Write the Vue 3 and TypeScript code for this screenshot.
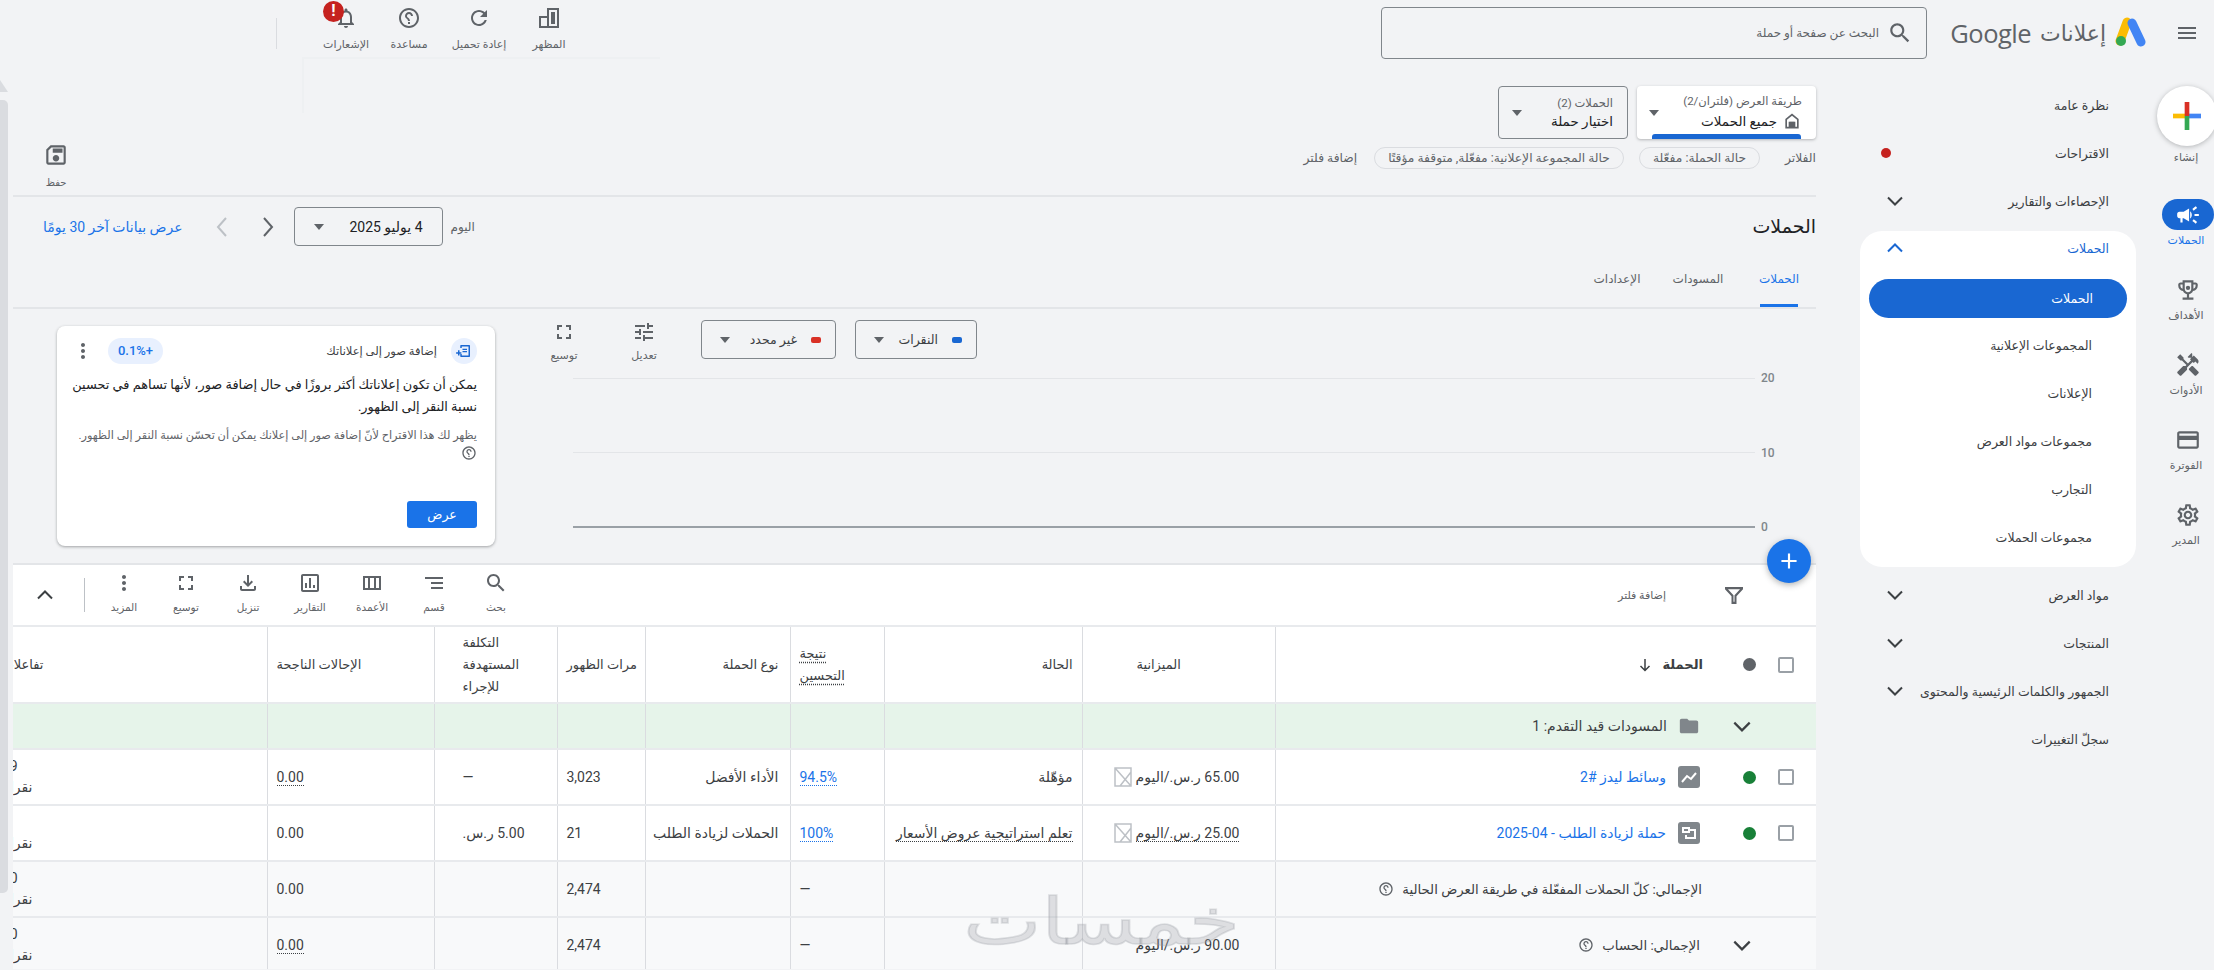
<script setup lang="ts">
interface RailItem {
  label: string
  icon: string
  active?: boolean
}

interface NavItem {
  label: string
  chevron?: boolean
  dot?: boolean
}

const ICONS: Record<string, string> = {
  menu: 'M3 18h18v-2H3v2zm0-5h18v-2H3v2zm0-7v2h18V6H3z',
  search:
    'M15.5 14h-.79l-.28-.27C15.41 12.59 16 11.11 16 9.5 16 5.91 13.09 3 9.5 3S3 5.91 3 9.5 5.91 16 9.5 16c1.61 0 3.09-.59 4.23-1.57l.27.28v.79l5 4.99L20.49 19l-4.99-5zm-6 0C7.01 14 5 11.99 5 9.5S7.01 5 9.5 5 14 7.01 14 9.5 11.99 14 9.5 14z',
  refresh:
    'M17.65 6.35C16.2 4.9 14.21 4 12 4c-4.42 0-7.99 3.58-7.99 8s3.57 8 7.99 8c3.73 0 6.84-2.55 7.73-6h-2.08c-.82 2.33-3.04 4-5.65 4-3.31 0-6-2.69-6-6s2.69-6 6-6c1.66 0 3.14.69 4.22 1.78L13 11h7V4l-2.35 2.35z',
  help: 'M11 18h2v-2h-2v2zm1-16C6.48 2 2 6.48 2 12s4.48 10 10 10 10-4.48 10-10S17.52 2 12 2zm0 18c-4.41 0-8-3.59-8-8s3.59-8 8-8 8 3.59 8 8-3.59 8-8 8zm0-14c-2.21 0-4 1.79-4 4h2c0-1.1.9-2 2-2s2 .9 2 2c0 2-3 1.75-3 5h2c0-2.25 3-2.5 3-5 0-2.21-1.79-4-4-4z',
  bell: 'M12 22c1.1 0 2-.9 2-2h-4c0 1.1.89 2 2 2zm6-6v-5c0-3.07-1.64-5.64-4.5-6.32V4c0-.83-.67-1.5-1.5-1.5s-1.5.67-1.5 1.5v.68C7.63 5.36 6 7.92 6 11v5l-2 2v1h16v-1l-2-2zm-2 1H8v-6c0-2.48 1.51-4.5 4-4.5s4 2.02 4 4.5v6z',
  appearance: 'M2 22V10h8V2h12v20H2zm2-2h6v-8H4v8zm8 0h8V4h-8v16zm2-14h4v12h-4z',
  save: 'M17 3H5c-1.11 0-2 .9-2 2v14c0 1.1.89 2 2 2h14c1.1 0 2-.9 2-2V7l-4-4zm2 16H5V5h11.17L19 7.83V19zm-7-7c-1.66 0-3 1.34-3 3s1.34 3 3 3 3-1.34 3-3-1.34-3-3-3zM6 6h9v4H6z',
  tune: 'M3 17v2h6v-2H3zM3 5v2h10V5H3zm10 16v-2h8v-2h-8v-2h-2v6h2zM7 9v2H3v2h4v2h2V9H7zm14 4v-2H11v2h10zm-6-4h2V7h4V5h-4V3h-2v6z',
  expand: 'M7 14H5v5h5v-2H7v-3zm-2-4h2V7h3V5H5v5zm12 7h-3v2h5v-5h-2v3zM14 5v2h3v3h2V5h-5z',
  campaign:
    'M18 11v2h4v-2h-4zm-2 6.61c.96.71 2.21 1.65 3.2 2.39.4-.53.8-1.07 1.2-1.6-.99-.74-2.24-1.68-3.2-2.4-.4.54-.8 1.08-1.2 1.61zM20.4 5.6c-.4-.53-.8-1.07-1.2-1.6-.99.74-2.24 1.68-3.2 2.4.4.53.8 1.07 1.2 1.6.96-.72 2.21-1.65 3.2-2.4zM4 9c-1.1 0-2 .9-2 2v2c0 1.1.9 2 2 2h1v4h2v-4h1l5 3V6L8 9H4zm11.5 3c0-1.33-.58-2.53-1.5-3.35v6.69c.92-.81 1.5-2.01 1.5-3.34z',
  trophy:
    'M19 5h-2V3H7v2H5c-1.1 0-2 .9-2 2v1c0 2.55 1.92 4.63 4.39 4.94.63 1.5 1.98 2.63 3.61 2.96V19H7v2h10v-2h-4v-3.1c1.63-.33 2.98-1.46 3.61-2.96C19.08 12.63 21 10.55 21 8V7c0-1.1-.9-2-2-2zM5 8V7h2v3.82C5.84 10.4 5 9.3 5 8zm7 6c-1.65 0-3-1.35-3-3V5h6v6c0 1.65-1.35 3-3 3zm7-6c0 1.3-.84 2.4-2 2.82V7h2v1zm-7 4a2 2 0 1 0 0-4 2 2 0 0 0 0 4z',
  tools:
    'M21.67 18.17l-5.3-5.3h-.99l-2.54 2.54v.99l5.3 5.3c.39.39 1.02.39 1.41 0l2.12-2.12c.39-.38.39-1.02 0-1.41zM17.34 10.19l1.41-1.41 2.12 2.12c1.17-1.17 1.17-3.07 0-4.24l-3.54-3.54-1.41 1.41V1.71l-.7-.71-3.54 3.54.71.71h2.83l-1.41 1.41 1.06 1.06-2.89 2.89-4.13-4.13V5.06L4.83 2.04 2 4.87 5.03 7.9h1.41l4.13 4.13-.85.85H7.6l-5.3 5.3c-.39.39-.39 1.02 0 1.41l2.12 2.12c.39.39 1.02.39 1.41 0l5.3-5.3v-2.12l5.15-5.15 1.06 1.05z',
  card: 'M20 4H4c-1.11 0-1.99.89-1.99 2L2 18c0 1.11.89 2 2 2h16c1.11 0 2-.89 2-2V6c0-1.11-.89-2-2-2zm0 14H4v-6h16v6zm0-10H4V6h16v2z',
  settings:
    'M19.43 12.98c.04-.32.07-.64.07-.98 0-.34-.03-.66-.07-.98l2.11-1.65c.19-.15.24-.42.12-.64l-2-3.46c-.09-.16-.26-.25-.44-.25-.06 0-.12.01-.17.03l-2.49 1c-.52-.4-1.08-.73-1.69-.98l-.38-2.65C14.46 2.18 14.25 2 14 2h-4c-.25 0-.46.18-.49.42l-.38 2.65c-.61.25-1.17.59-1.69.98l-2.49-1c-.06-.02-.12-.03-.18-.03-.17 0-.34.09-.43.25l-2 3.46c-.13.22-.07.49.12.64l2.11 1.65c-.04.32-.07.65-.07.98 0 .33.03.66.07.98l-2.11 1.65c-.19.15-.24.42-.12.64l2 3.46c.09.16.26.25.44.25.06 0 .12-.01.17-.03l2.49-1c.52.4 1.08.73 1.69.98l.38 2.65c.03.24.24.42.49.42h4c.25 0 .46-.18.49-.42l.38-2.65c.61-.25 1.17-.59 1.69-.98l2.49 1c.06.02.12.03.18.03.17 0 .34-.09.43-.25l2-3.46c.12-.22.07-.49-.12-.64l-2.11-1.65zm-1.98-1.71c.04.31.05.52.05.73 0 .21-.02.43-.05.73l-.14 1.13.89.7 1.08.84-.7 1.21-1.27-.51-1.04-.42-.9.68c-.43.32-.84.56-1.25.73l-1.06.43-.16 1.13-.2 1.35h-1.4l-.19-1.35-.16-1.13-1.06-.43c-.43-.18-.83-.41-1.23-.71l-.91-.7-1.06.43-1.27.51-.7-1.21 1.08-.84.89-.7-.14-1.13c-.03-.31-.05-.54-.05-.74s.02-.43.05-.73l.14-1.13-.89-.7-1.08-.84.7-1.21 1.27.51 1.04.42.9-.68c.43-.32.84-.56 1.25-.73l1.06-.43.16-1.13.2-1.35h1.39l.19 1.35.16 1.13 1.06.43c.43.18.83.41 1.23.71l.91.7 1.06-.43 1.27-.51.7 1.21-1.07.85-.89.7.14 1.13zM12 8c-2.21 0-4 1.79-4 4s1.79 4 4 4 4-1.79 4-4-1.79-4-4-4zm0 6c-1.1 0-2-.9-2-2s.9-2 2-2 2 .9 2 2-.9 2-2 2z',
  segment: 'M9 18h12v-2H9v2zM3 6v2h18V6H3zm6 7h12v-2H9v2z',
  columns: 'M3 5v14h18V5H3zm5 12H5V7h3v10zm6 0h-4V7h4v10zm5 0h-3V7h3v10z',
  reports:
    'M19 3H5c-1.1 0-2 .9-2 2v14c0 1.1.9 2 2 2h14c1.1 0 2-.9 2-2V5c0-1.1-.9-2-2-2zm0 16H5V5h14v14zM7 12h2v5H7zm4-5h2v10h-2zm4 7h2v3h-2z',
  download:
    'M18 15v3H6v-3H4v3c0 1.1.9 2 2 2h12c1.1 0 2-.9 2-2v-3h-2zm-1-4l-1.41-1.41L13 12.17V4h-2v8.17L8.41 9.59 7 11l5 5 5-5z',
  more: 'M12 8c1.1 0 2-.9 2-2s-.9-2-2-2-2 .9-2 2 .9 2 2 2zm0 2c-1.1 0-2 .9-2 2s.9 2 2 2 2-.9 2-2-.9-2-2-2zm0 6c-1.1 0-2 .9-2 2s.9 2 2 2 2-.9 2-2-.9-2-2-2z',
  filter: 'M3 4h18v2.2l-6.5 7V21h-5v-7.8L3 6.2V4zm3 2.2l5.5 6v6.6h1V12.2L18 6.2H6z',
  home: 'M12 3L4 9.5V21h16V9.5L12 3zm-6 16v-8.5l6-4.8 6 4.8V19h-2v-6H8v6H6z',
  folder: 'M10 4H4c-1.1 0-2 .9-2 2v12c0 1.1.9 2 2 2h16c1.1 0 2-.9 2-2V8c0-1.1-.9-2-2-2h-8l-2-2z',
}

const railItems: RailItem[] = [
  { label: 'الحملات', icon: 'campaign', active: true },
  { label: 'الأهداف', icon: 'trophy' },
  { label: 'الأدوات', icon: 'tools' },
  { label: 'الفوترة', icon: 'card' },
  { label: 'المدير', icon: 'settings' },
]

const topNav: NavItem[] = [
  { label: 'نظرة عامة' },
  { label: 'الاقتراحات', dot: true },
  { label: 'الإحصاءات والتقارير', chevron: true },
]

const subNav = ['المجموعات الإعلانية', 'الإعلانات', 'مجموعات مواد العرض', 'التجارب', 'مجموعات الحملات']

const bottomNav: NavItem[] = [
  { label: 'مواد العرض', chevron: true },
  { label: 'المنتجات', chevron: true },
  { label: 'الجمهور والكلمات الرئيسية والمحتوى', chevron: true },
  { label: 'سجلّ التغييرات' },
]

const headerTools = [
  { label: 'المظهر', icon: 'appearance' },
  { label: 'إعادة تحميل', icon: 'refresh' },
  { label: 'مساعدة', icon: 'help' },
]

const tableTools = [
  { label: 'بحث', icon: 'search' },
  { label: 'قسم', icon: 'segment' },
  { label: 'الأعمدة', icon: 'columns' },
  { label: 'التقارير', icon: 'reports' },
  { label: 'تنزيل', icon: 'download' },
  { label: 'توسيع', icon: 'expand' },
  { label: 'المزيد', icon: 'more' },
]

const colWidths = [541, 193, 198, 94, 145, 88, 123, 167, 266]
const gridRows = [20, 10, 0]
</script>

<template>
  <div class="page">
    <div class="scroll-thumb"></div>
    <div class="scroll-arrow"></div>
    <div class="ghost"></div>

    <header class="topbar">
      <button class="menu-btn">
        <svg viewBox="0 0 24 24" width="24" height="24"><path :d="ICONS.menu" /></svg>
      </button>
      <div class="brand">
        <svg class="logo" viewBox="0 0 34 30" width="34" height="30">
          <line x1="12" y1="5" x2="5" y2="24" stroke="#fbbc04" stroke-width="9" stroke-linecap="round" />
          <line x1="17" y1="6" x2="26" y2="25" stroke="#4285f4" stroke-width="9" stroke-linecap="round" />
          <circle cx="6" cy="24" r="5" fill="#34a853" />
        </svg>
        <span class="brand-ar">إعلانات</span>
        <span class="brand-en">Google</span>
      </div>
      <div class="search">
        <svg viewBox="0 0 24 24" width="26" height="26"><path :d="ICONS.search" /></svg>
        <span>البحث عن صفحة أو حملة</span>
      </div>
      <div class="head-tools">
        <div v-for="tool in headerTools" :key="tool.label" class="head-tool">
          <svg viewBox="0 0 24 24" width="24" height="24" :class="{ mirror: tool.icon === 'help' }"><path :d="ICONS[tool.icon]" /></svg>
          <span>{{ tool.label }}</span>
        </div>
        <div class="head-tool narrow">
          <svg viewBox="0 0 24 24" width="24" height="24"><path :d="ICONS.bell" /></svg>
          <span>الإشعارات</span>
          <i class="alert">!</i>
        </div>
      </div>
    </header>

    <div class="body">
      <aside class="rail">
        <div class="create">
          <button class="create-btn">
            <svg viewBox="0 0 24 24" width="28" height="28">
              <rect x="0" y="10" width="12" height="4" fill="#fbbc04" />
              <rect x="12" y="10" width="12" height="4" fill="#4285f4" />
              <rect x="10" y="0" width="4" height="12" fill="#d93025" />
              <rect x="10" y="12" width="4" height="12" fill="#34a853" />
            </svg>
          </button>
          <span>إنشاء</span>
        </div>
        <div v-for="item in railItems" :key="item.label" class="rail-item" :class="{ active: item.active }">
          <div class="rail-icon">
            <svg viewBox="0 0 24 24" width="26" height="26"><path :d="ICONS[item.icon]" /></svg>
          </div>
          <span>{{ item.label }}</span>
        </div>
      </aside>

      <nav class="nav">
        <div v-for="item in topNav" :key="item.label" class="nav-item">
          <span>{{ item.label }}</span>
          <i v-if="item.dot" class="nav-dot"></i>
          <svg v-if="item.chevron" class="chev" viewBox="0 0 16 10" width="16" height="10"><path d="M1 1.5l7 7 7-7" /></svg>
        </div>
        <div class="nav-panel">
          <div class="nav-head">
            <span>الحملات</span>
            <svg class="chev" viewBox="0 0 16 10" width="16" height="10"><path d="M1 8.5l7-7 7 7" /></svg>
          </div>
          <div class="nav-pill">الحملات</div>
          <div v-for="label in subNav" :key="label" class="nav-sub">{{ label }}</div>
        </div>
        <div class="nav-after">
          <div v-for="item in bottomNav" :key="item.label" class="nav-item">
            <span>{{ item.label }}</span>
            <svg v-if="item.chevron" class="chev" viewBox="0 0 16 10" width="16" height="10"><path d="M1 1.5l7 7 7-7" /></svg>
          </div>
        </div>
      </nav>

      <main class="content">
        <section class="top-block">
          <div class="top-right">
            <div class="views">
              <div class="view-card">
                <div class="view-text">
                  <small>طريقة العرض (فلتران/2)</small>
                  <strong>
                    <svg viewBox="0 0 24 24" width="20" height="20"><path :d="ICONS.home" /><rect x="9" y="13" width="6" height="6" /></svg>
                    جميع الحملات
                  </strong>
                </div>
                <i class="caret"></i>
                <b class="view-bar"></b>
              </div>
              <div class="view-select">
                <div class="view-text">
                  <small>الحملات (2)</small>
                  <strong>اختيار حملة</strong>
                </div>
                <i class="caret"></i>
              </div>
            </div>
            <div class="filters">
              <span class="filters-label">الفلاتر</span>
              <span class="chip">حالة الحملة: مفعّلة</span>
              <span class="chip">حالة المجموعة الإعلانية: مفعّلة, متوقفة مؤقتًا</span>
              <span class="add-filter">إضافة فلتر</span>
            </div>
          </div>
          <div class="save">
            <svg class="mirror" viewBox="0 0 24 24" width="26" height="26"><path :d="ICONS.save" /></svg>
            <span>حفظ</span>
          </div>
        </section>

        <section class="title-row">
          <h1>الحملات</h1>
          <div class="dates">
            <span class="today">اليوم</span>
            <div class="date-box">
              <span>4 يوليو 2025</span>
              <i class="caret"></i>
            </div>
            <svg class="nav-arrow" viewBox="0 0 12 20" width="12" height="20"><path d="M2 1l8 9-8 9" /></svg>
            <svg class="nav-arrow off" viewBox="0 0 12 20" width="12" height="20"><path d="M10 1l-8 9 8 9" /></svg>
            <a class="last-days">عرض بيانات آخر 30 يومًا</a>
          </div>
        </section>

        <section class="tabs">
          <span class="tab on">الحملات</span>
          <span class="tab">المسودات</span>
          <span class="tab">الإعدادات</span>
        </section>

        <section class="chart-sec">
          <div class="chart">
            <div class="controls">
              <div class="metric"><i class="swatch blue"></i><span>النقرات</span><i class="caret"></i></div>
              <div class="metric wide"><i class="swatch red"></i><span>غير محدد</span><i class="caret"></i></div>
              <div class="ctl">
                <svg viewBox="0 0 24 24" width="24" height="24"><path :d="ICONS.tune" /></svg>
                <span>تعديل</span>
              </div>
              <div class="ctl">
                <svg viewBox="0 0 24 24" width="24" height="24"><path :d="ICONS.expand" /></svg>
                <span>توسيع</span>
              </div>
            </div>
            <div class="plot">
              <div v-for="value in gridRows" :key="value" class="plot-row" :class="{ base: value === 0 }">
                <span>{{ value }}</span>
                <i></i>
              </div>
            </div>
          </div>
          <article class="tip">
            <div class="tip-head">
              <span class="tip-icon">
                <svg viewBox="0 0 24 24" width="18" height="18">
                  <path d="M8 4h11a1 1 0 0 1 1 1v14a1 1 0 0 1-1 1H8a1 1 0 0 1-1-1v-3h2v2h9V6H9v2H7V5a1 1 0 0 1 1-1z" />
                  <path d="M10 9h6v1.6h-6zM10 12h6v1.6h-6zM4 11h2v2.5h2.500v2H6V18H4v-2.500H1.500v-2H4z" />
                </svg>
              </span>
              <span class="tip-title">إضافة صور إلى إعلاناتك</span>
              <span class="tip-pill">0.1%+</span>
              <svg class="tip-more" viewBox="0 0 24 24" width="24" height="24"><path :d="ICONS.more" /></svg>
            </div>
            <p class="tip-body">يمكن أن تكون إعلاناتك أكثر بروزًا في حال إضافة صور، لأنها تساهم في تحسين نسبة النقر إلى الظهور.</p>
            <p class="tip-note">
              يظهر لك هذا الاقتراح لأنّ إضافة صور إلى إعلانك يمكن أن تحسّن نسبة النقر إلى الظهور.
              <svg class="mirror" viewBox="0 0 24 24" width="16" height="16"><path :d="ICONS.help" /></svg>
            </p>
            <button class="tip-btn">عرض</button>
          </article>
          <button class="fab">
            <svg viewBox="0 0 24 24" width="26" height="26"><path d="M19 13h-6v6h-2v-6H5v-2h6V5h2v6h6v2z" /></svg>
          </button>
        </section>

        <section class="grid-card">
          <div class="toolbar">
            <svg class="funnel" viewBox="0 0 24 24" width="24" height="24"><path :d="ICONS.filter" /></svg>
            <span class="tool-filter">إضافة فلتر</span>
            <div class="tool-list">
              <div v-for="tool in tableTools" :key="tool.label" class="tool">
                <svg viewBox="0 0 24 24" width="24" height="24"><path :d="ICONS[tool.icon]" /></svg>
                <span>{{ tool.label }}</span>
              </div>
            </div>
            <i class="tool-sep"></i>
            <svg class="tool-collapse" viewBox="0 0 16 10" width="16" height="10"><path d="M1 8.5l7-7 7 7" /></svg>
          </div>

          <div class="table-wrap">
            <table>
              <colgroup>
                <col v-for="(w, i) in colWidths" :key="i" :style="{ width: w + 'px' }" />
              </colgroup>
              <thead>
                <tr class="r-head">
                  <th>
                    <div class="name-cell">
                      <i class="check"></i>
                      <i class="dot gray"></i>
                      <b class="name-head">الحملة</b>
                      <svg class="sort" viewBox="0 0 16 16" width="16" height="16"><path d="M8 2v11M3.500 9L8 13.500 12.500 9" /></svg>
                    </div>
                  </th>
                  <th class="budget-h">الميزانية</th>
                  <th class="r">الحالة</th>
                  <th class="l"><span class="dotted-h">نتيجة<br />التحسين</span></th>
                  <th class="r type">نوع الحملة</th>
                  <th class="l">مرات الظهور</th>
                  <th class="l cost">التكلفة<br />المستهدفة<br />للإجراء</th>
                  <th class="l">الإحالات الناجحة</th>
                  <th class="inter"><span>تفاعلات</span></th>
                </tr>
              </thead>
              <tbody>
                <tr class="r-draft">
                  <td>
                    <div class="name-cell draft">
                      <svg class="chev big" viewBox="0 0 16 10" width="18" height="11"><path d="M1 1.500l7 7 7-7" /></svg>
                      <svg class="row-icon plain" viewBox="0 0 24 24" width="26" height="26"><path :d="ICONS.folder" /></svg>
                      <span>المسودات قيد التقدم: 1</span>
                    </div>
                  </td>
                  <td></td><td></td><td></td><td></td><td></td><td></td><td></td><td></td>
                </tr>
                <tr class="r-row">
                  <td>
                    <div class="name-cell">
                      <i class="check"></i>
                      <i class="dot green"></i>
                      <span class="badge">
                        <svg viewBox="0 0 22 22" width="22" height="22"><path d="M4 16l5-6 4 3 5-6" /></svg>
                      </span>
                      <a class="link">وسائط ليدز #2</a>
                    </div>
                  </td>
                  <td>
                    <div class="budget">
                      <span>65.00 ر.س./اليوم</span>
                      <svg viewBox="0 0 20 20" width="20" height="20"><path d="M2 1h16v18H2zM2 1l16 18M18 5L7 19" /></svg>
                    </div>
                  </td>
                  <td class="r">مؤهّلة</td>
                  <td class="l"><span class="under link">94.5%</span></td>
                  <td class="r type">الأداء الأفضل</td>
                  <td class="l">3,023</td>
                  <td class="l cost">—</td>
                  <td class="l"><span class="under">0.00</span></td>
                  <td class="inter"><div>9</div><div class="clicks">نقرات</div></td>
                </tr>
                <tr class="r-row">
                  <td>
                    <div class="name-cell">
                      <i class="check"></i>
                      <i class="dot green"></i>
                      <span class="badge">
                        <svg viewBox="0 0 22 22" width="22" height="22"><path d="M5 6h6v4H5zM11 8h6v8H8v-3" /></svg>
                      </span>
                      <a class="link">حملة لزيادة الطلب - <bdi dir="ltr">2025-04</bdi></a>
                    </div>
                  </td>
                  <td>
                    <div class="budget">
                      <span class="under">25.00 ر.س./اليوم</span>
                      <svg viewBox="0 0 20 20" width="20" height="20"><path d="M2 1h16v18H2zM2 1l16 18M18 5L7 19" /></svg>
                    </div>
                  </td>
                  <td class="r"><span class="under">تعلم استراتيجية عروض الأسعار</span></td>
                  <td class="l"><span class="under link">100%</span></td>
                  <td class="r type">الحملات لزيادة الطلب</td>
                  <td class="l">21</td>
                  <td class="l cost">5.00 ر.س.</td>
                  <td class="l">0.00</td>
                  <td class="inter"><div>&nbsp;</div><div class="clicks">نقرات</div></td>
                </tr>
                <tr class="r-total">
                  <td>
                    <div class="name-cell total">
                      <span>الإجمالي: كلّ الحملات المفعّلة في طريقة العرض الحالية</span>
                      <svg class="mirror tot-help" viewBox="0 0 24 24" width="16" height="16"><path :d="ICONS.help" /></svg>
                    </div>
                  </td>
                  <td></td>
                  <td></td>
                  <td class="l">—</td>
                  <td></td>
                  <td class="l">2,474</td>
                  <td></td>
                  <td class="l">0.00</td>
                  <td class="inter"><div>0</div><div class="clicks">نقرات</div></td>
                </tr>
                <tr class="r-total">
                  <td>
                    <div class="name-cell total acct">
                      <svg class="chev big" viewBox="0 0 16 10" width="18" height="11"><path d="M1 1.500l7 7 7-7" /></svg>
                      <span>الإجمالي: الحساب</span>
                      <svg class="mirror tot-help" viewBox="0 0 24 24" width="16" height="16"><path :d="ICONS.help" /></svg>
                    </div>
                  </td>
                  <td>
                    <div class="budget">
                      <span>90.00 ر.س./اليوم</span>
                      <svg class="blank" viewBox="0 0 20 20" width="20" height="20"></svg>
                    </div>
                  </td>
                  <td></td>
                  <td class="l">—</td>
                  <td></td>
                  <td class="l">2,474</td>
                  <td></td>
                  <td class="l"><span class="under">0.00</span></td>
                  <td class="inter"><div>0</div><div class="clicks">نقرات</div></td>
                </tr>
              </tbody>
            </table>
          </div>
        </section>
      </main>
    </div>

    <div class="watermark">خمسات</div>
  </div>
</template>

<style>
html,
body {
  margin: 0;
  background: #f2f3f5;
}
</style>

<style scoped>
.page {
  position: relative;
  width: 2214px;
  height: 970px;
  overflow: hidden;
  direction: rtl;
  background: #f2f3f5;
  color: #3c4043;
  font-family: Roboto, "DejaVu Sans", sans-serif;
  font-size: 12px;
}

svg {
  fill: #5f6368;
  display: block;
  flex: none;
}

.mirror {
  transform: scaleX(-1);
}

button {
  border: 0;
  background: none;
  padding: 0;
  font: inherit;
}

.scroll-thumb {
  position: absolute;
  left: 0;
  top: 100px;
  width: 8px;
  height: 793px;
  background: #dadce0;
  border-radius: 0 5px 5px 0;
}

.scroll-arrow {
  position: absolute;
  left: 0;
  top: 80px;
  width: 0;
  height: 0;
  border-bottom: 12px solid #dadce0;
  border-right: 8px solid transparent;
}

.ghost {
  position: absolute;
  left: 302px;
  top: 57px;
  width: 358px;
  height: 56px;
  border-top: 2px solid #eef0f2;
  border-left: 2px solid #eef0f2;
  box-sizing: border-box;
}

/* top bar */
.topbar {
  display: flex;
  align-items: center;
  height: 66px;
}

.menu-btn {
  width: 54px;
  display: flex;
  justify-content: center;
}

.brand {
  display: flex;
  align-items: center;
  gap: 9px;
  width: 222px;
  margin-right: 11px;
  white-space: nowrap;
}

.logo {
  margin-top: -2px;
}

.brand-ar {
  font-size: 22px;
  color: #5f6368;
}

.brand-en {
  font-family: "Open Sans", sans-serif;
  font-size: 25.5px;
  color: #5f6368;
  letter-spacing: -0.5px;
}

.search {
  box-sizing: border-box;
  width: 546px;
  height: 52px;
  display: flex;
  align-items: center;
  gap: 8px;
  padding-right: 13px;
  border: 1px solid #80868b;
  border-radius: 4px;
  color: #5f6368;
  font-size: 12px;
}

.head-tools {
  display: flex;
  margin-right: auto;
  margin-left: 318px;
  margin-top: -10px;
  position: relative;
}

.head-tools::after {
  content: "";
  position: absolute;
  left: -42px;
  top: 12px;
  bottom: 2px;
  border-left: 1px solid #dadce0;
}

.head-tool {
  position: relative;
  width: 70px;
  display: flex;
  flex-direction: column;
  align-items: center;
  gap: 8px;
  font-size: 11px;
  color: #5f6368;
  white-space: nowrap;
}

.head-tool.narrow {
  width: 56px;
}

.alert {
  position: absolute;
  top: -5px;
  right: 30px;
  width: 21px;
  height: 21px;
  border-radius: 50%;
  background: #c5221f;
  color: #fff;
  font: 700 16px/20px Roboto, sans-serif;
  text-align: center;
}

.body {
  display: flex;
  height: 904px;
}

/* icon rail */
.rail {
  width: 56px;
  flex: none;
  padding-top: 20px;
  box-sizing: border-box;
  text-align: center;
  font-size: 11px;
  color: #5f6368;
}

.create {
  height: 113px;
  display: flex;
  flex-direction: column;
  align-items: center;
}

.create-btn {
  flex: none;
  width: 60px;
  height: 60px;
  margin-right: -1px;
  border-radius: 50%;
  background: #fff;
  box-shadow: 0 1px 5px rgba(60, 64, 67, 0.35);
  display: flex;
  align-items: center;
  justify-content: center;
}

.create span {
  margin-top: 5px;
}

.rail-item {
  height: 75px;
  display: flex;
  flex-direction: column;
  align-items: center;
}

.rail-icon {
  width: 52px;
  height: 31px;
  align-self: flex-start;
  display: flex;
  align-items: center;
  justify-content: center;
  border-radius: 16px;
}

.rail-item span {
  margin-top: 4px;
}

.rail-item.active .rail-icon {
  background: #1967d2;
}

.rail-item.active svg {
  fill: #fff;
}

.rail-item.active span {
  color: #1a73e8;
}

/* secondary nav */
.nav {
  width: 342px;
  flex: none;
  box-sizing: border-box;
  padding: 15px 22px 0 44px;
  font-size: 12.5px;
  color: #3c4043;
}

.nav-item,
.nav-head,
.nav-sub {
  display: flex;
  align-items: center;
  justify-content: space-between;
  height: 48px;
  padding: 0 27px;
}

.nav-dot {
  width: 10px;
  height: 10px;
  margin-left: -6px;
  border-radius: 50%;
  background: #c5221f;
}

.chev {
  fill: none;
  stroke: #3c4043;
  stroke-width: 2;
}

.nav-panel {
  margin-top: 6px;
  padding-bottom: 6px;
  background: #fff;
  border-radius: 22px;
}

.nav-head {
  height: 34px;
  color: #1967d2;
}

.nav-head .chev {
  stroke: #1967d2;
}

.nav-pill {
  margin: 14px 9px 3px;
  height: 39px;
  line-height: 39px;
  padding-right: 34px;
  border-radius: 20px;
  background: #1967d2;
  color: #fff;
}

.nav-sub {
  padding-right: 44px;
  padding-left: 0;
}

.nav-after {
  margin-top: 4px;
}

/* main column */
.content {
  flex: 1;
  min-width: 0;
  padding-left: 13px;
}

.top-block {
  display: flex;
  justify-content: space-between;
  height: 131px;
  border-bottom: 2px solid #e3e5e8;
  box-sizing: border-box;
}

.top-right {
  padding-top: 20px;
}

.views {
  display: flex;
  gap: 9px;
}

.view-card,
.view-select {
  position: relative;
  box-sizing: border-box;
  height: 53px;
  display: flex;
  align-items: center;
  justify-content: space-between;
  border-radius: 4px;
}

.view-card {
  width: 179px;
  padding: 0 14px 0 12px;
  background: #fff;
  box-shadow: 0 1px 3px rgba(60, 64, 67, 0.35);
}

.view-select {
  width: 130px;
  padding: 0 14px 0 13px;
  border: 1px solid #80868b;
}

.view-text {
  display: flex;
  flex-direction: column;
  gap: 3px;
}

.view-text small {
  font-size: 11.5px;
  color: #5f6368;
  white-space: nowrap;
}

.view-text strong {
  display: flex;
  align-items: center;
  gap: 5px;
  font-size: 13.5px;
  font-weight: 400;
  color: #202124;
  white-space: nowrap;
}

.view-bar {
  position: absolute;
  right: 15px;
  left: 15px;
  bottom: 0;
  height: 5px;
  background: #1967d2;
  border-radius: 3px 3px 0 0;
}

.caret {
  width: 0;
  height: 0;
  border-top: 6px solid #5f6368;
  border-left: 5px solid transparent;
  border-right: 5px solid transparent;
}

.filters {
  display: flex;
  align-items: center;
  margin-top: 8px;
  color: #5f6368;
  font-size: 12.3px;
  white-space: nowrap;
}

.filters-label {
  width: 56px;
}

.chip {
  height: 22px;
  line-height: 20px;
  box-sizing: border-box;
  padding: 0 13px;
  border: 1px solid #dadce0;
  border-radius: 11px;
  margin-left: 15px;
}

.add-filter {
  margin-right: 2px;
}

.save {
  align-self: flex-end;
  width: 40px;
  margin-left: 23px;
  margin-bottom: 7px;
  display: flex;
  flex-direction: column;
  align-items: center;
  gap: 9px;
  font-size: 10px;
  color: #5f6368;
}

.title-row {
  display: flex;
  justify-content: space-between;
  align-items: center;
  height: 59px;
}

h1 {
  margin: 0;
  font-size: 19px;
  font-weight: 400;
  color: #202124;
}

.dates {
  display: flex;
  align-items: center;
  padding-left: 30px;
  font-size: 13px;
}

.today {
  color: #5f6368;
  margin-left: 8px;
  font-size: 12px;
}

.date-box {
  box-sizing: border-box;
  width: 149px;
  height: 39px;
  display: flex;
  align-items: center;
  justify-content: space-between;
  padding: 0 19px;
  border: 1px solid #80868b;
  border-radius: 4px;
  font-size: 14px;
  color: #202124;
}

.nav-arrow {
  fill: none;
  stroke: #5f6368;
  stroke-width: 2;
  margin-right: 20px;
}

.nav-arrow.off {
  stroke: #bdc1c6;
  margin-right: 34px;
}

.last-days {
  margin-right: 33px;
  color: #1a73e8;
  font-size: 14px;
  white-space: nowrap;
}

.tabs {
  display: flex;
  gap: 43px;
  height: 53px;
  padding-right: 18px;
  border-bottom: 2px solid #e3e5e8;
  box-sizing: border-box;
}

.tab {
  position: relative;
  width: 38px;
  display: flex;
  justify-content: center;
  white-space: nowrap;
  padding-top: 16px;
  color: #5f6368;
  font-size: 12px;
}

.tab.on {
  color: #1a73e8;
}

.tab.on::after {
  content: "";
  position: absolute;
  left: 0;
  right: 0;
  bottom: 0;
  height: 3px;
  background: #1a73e8;
}

.chart-sec {
  position: relative;
  display: flex;
  height: 254px;
  box-sizing: border-box;
}

.chart {
  flex: 1;
  padding-top: 11px;
}

.controls {
  display: flex;
  justify-content: flex-end;
  align-items: flex-start;
  height: 40px;
  padding-left: 44px;
}

.metric {
  box-sizing: border-box;
  width: 122px;
  height: 39px;
  display: flex;
  align-items: center;
  gap: 14px;
  padding: 0 14px 0 18px;
  border: 1px solid #80868b;
  border-radius: 4px;
  color: #3c4043;
  font-size: 12.5px;
}

.metric .caret {
  margin-right: auto;
}

.metric.wide {
  width: 135px;
  margin-right: 19px;
}

.swatch {
  width: 10px;
  height: 6px;
  border-radius: 2px;
}

.swatch.blue {
  background: #1967d2;
}

.swatch.red {
  background: #d93025;
}

.ctl {
  width: 60px;
  margin-right: 27px;
  display: flex;
  flex-direction: column;
  align-items: center;
  gap: 5px;
  color: #5f6368;
  font-size: 11px;
}

.ctl:last-child {
  width: 50px;
  margin-right: 3px;
  margin-right: 25px;
}

.plot {
  padding-top: 8px;
  padding-right: 41px;
  padding-left: 78px;
}

.plot-row {
  display: flex;
  align-items: center;
  gap: 6px;
  height: 20px;
  margin-bottom: 54.5px;
  color: #80868b;
  font-size: 12px;
  font-weight: 500;
}

.plot-row span {
  width: 14px;
  direction: ltr;
  text-align: left;
}

.plot-row i {
  flex: 1;
  border-top: 1px solid #e3e5e8;
}

.plot-row.base i {
  border-top: 2px solid #9aa0a6;
}

.tip {
  box-sizing: border-box;
  width: 438px;
  height: 220px;
  margin: 17px 0 0 44px;
  padding: 12px 18px 18px 12px;
  display: flex;
  flex-direction: column;
  flex: none;
  background: #fff;
  border-radius: 8px;
  box-shadow: 0 1px 3px rgba(60, 64, 67, 0.45);
}

.tip-head {
  display: flex;
  align-items: center;
  height: 26px;
  gap: 14px;
}

.tip-icon {
  width: 26px;
  height: 26px;
  display: flex;
  align-items: center;
  justify-content: center;
  border-radius: 50%;
  background: #e8f0fe;
}

.tip-icon svg {
  fill: #1967d2;
}

.tip-title {
  font-size: 11.5px;
  color: #3c4043;
}

.tip-pill {
  margin-right: auto;
  margin-left: -1px;
  width: 55px;
  height: 26px;
  border-radius: 13px;
  background: #e8f0fe;
  color: #1a73e8;
  direction: ltr;
  text-align: center;
  line-height: 26px;
  font-size: 13px;
  font-weight: 500;
}

.tip-more {
  margin-left: 2px;
}

.tip-body {
  margin: 10px 0 0;
  font-size: 12.9px;
  line-height: 22px;
  color: #202124;
}

.tip-note {
  margin: 8px 0 0;
  font-size: 11.3px;
  line-height: 19px;
  color: #5f6368;
}

.tip-btn {
  align-self: flex-start;
  margin-top: auto;
  width: 70px;
  height: 27px;
  background: #1a73e8;
  color: #fff;
  border-radius: 3px;
  font-size: 12.5px;
}

.fab {
  position: absolute;
  right: 5px;
  bottom: -20px;
  width: 44px;
  height: 44px;
  border-radius: 50%;
  background: #1a73e8;
  box-shadow: 0 2px 6px rgba(60, 64, 67, 0.4);
  display: flex;
  align-items: center;
  justify-content: center;
  z-index: 2;
}

.fab svg {
  fill: #fff;
}

/* table card */
.grid-card {
  background: #fff;
  border-top: 2px solid #e3e5e8;
}

.toolbar {
  display: flex;
  align-items: center;
  height: 60px;
  padding-right: 70px;
  padding-left: 24px;
}

.tool-filter {
  margin-right: 56px;
  color: #5f6368;
  font-size: 11px;
}

.tool-list {
  display: flex;
  margin-right: auto;
  margin-top: -6px;
}

.tool {
  width: 62px;
  display: flex;
  flex-direction: column;
  align-items: center;
  gap: 6px;
  font-size: 10.5px;
  color: #5f6368;
}

.tool-sep {
  height: 34px;
  margin-right: 8px;
  border-left: 1px solid #bdc1c6;
}

.tool-collapse {
  margin-right: 31px;
  fill: none;
  stroke: #3c4043;
  stroke-width: 2;
}

.table-wrap {
  overflow: hidden;
  height: 344px;
}

table {
  width: 1815px;
  table-layout: fixed;
  border-collapse: collapse;
  font-size: 14px;
}

th {
  font-weight: 400;
  font-size: 13px;
  line-height: 22px;
  color: #3c4043;
}

th,
td {
  padding: 0;
  border-left: 1px solid #dadce0;
  text-align: right;
  white-space: nowrap;
}

th.l,
td.l {
  text-align: left;
  padding-left: 9px;
  white-space: normal;
}

th.cost,
td.cost {
  padding-left: 28px;
}

.r {
  padding-right: 9px;
}

.type {
  padding-right: 11px;
}

tr {
  border-bottom: 2px solid #e8eaed;
}

.r-head {
  height: 77px;
  border-top: 2px solid #e8eaed;
}

.r-draft {
  height: 46px;
  background: #e6f4ea;
}

.r-row {
  height: 56px;
}

.r-total {
  height: 56px;
  background: #f8f9fa;
}

.name-cell {
  display: flex;
  align-items: center;
  padding-right: 22px;
}

.check {
  width: 16px;
  height: 16px;
  box-sizing: border-box;
  border: 2px solid #9aa0a6;
  border-radius: 2px;
  flex: none;
}

.dot {
  width: 13px;
  height: 13px;
  margin-right: 22px;
  border-radius: 50%;
  flex: none;
}

.dot.gray {
  background: #5f6368;
}

.dot.green {
  background: #188038;
}

.name-head {
  margin-right: 40px;
}

.sort {
  margin-right: 9px;
  fill: none;
  stroke: #3c4043;
  stroke-width: 1.5;
}

.badge {
  width: 22px;
  height: 22px;
  margin-right: 43px;
  margin-left: 12px;
  flex: none;
  border-radius: 3px;
  background: #80868b;
}

.badge svg {
  fill: none;
  stroke: #fff;
  stroke-width: 2;
}

.link {
  color: #1a73e8;
}

.under {
  display: inline-block;
  border-bottom: 1.5px dotted currentColor;
}

.dotted-h {
  text-decoration: underline dotted;
  text-underline-offset: 4px;
}

.name-cell.draft {
  padding-right: 65px;
}

.row-icon.plain {
  margin-right: 33px;
  margin-left: 11px;
  fill: #80868b;
  width: 22px;
}

.name-cell.total {
  padding-right: 114px;
  font-size: 13.3px;
}

.name-cell.acct {
  padding-right: 65px;
}

.acct .chev {
  margin-left: 33px;
}

.tot-help {
  margin-right: 8px;
}

.budget-h {
  text-align: left;
  padding-left: 54px;
}

.budget {
  display: flex;
  align-items: center;
  justify-content: flex-end;
  gap: 3px;
  padding-left: 30px;
}

.budget svg {
  fill: none;
  stroke: #bdc1c6;
  stroke-width: 1.5;
}

.inter {
  border-left: 0;
  padding-right: 223px;
  line-height: 21px;
}

td.inter {
  padding-right: 249px;
}

.clicks {
  margin-right: -15px;
}

.watermark {
  position: absolute;
  left: 973px;
  top: 872px;
  width: 267px;
  text-align: center;
  font-size: 83px;
  line-height: 100px;
  transform: scaleY(0.78);
  -webkit-text-stroke: 2px rgba(150, 155, 160, 0.28);
  color: rgba(150, 155, 160, 0.28);
}
</style>
